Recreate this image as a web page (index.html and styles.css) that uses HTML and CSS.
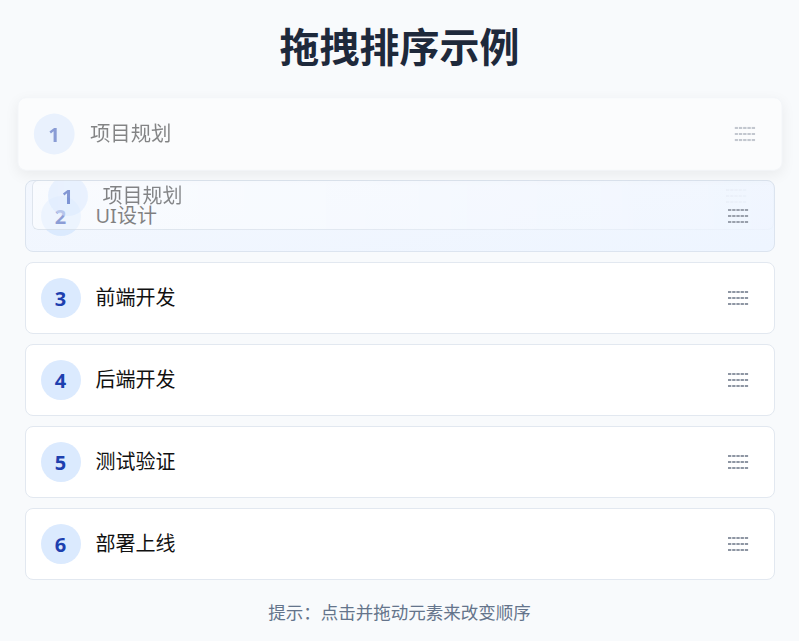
FILE: index.html
```html
<!DOCTYPE html>
<html lang="zh-CN">
<head>
  <meta charset="UTF-8" />
  <meta name="viewport" content="width=device-width, initial-scale=1.0" />
  <title>拖拽排序示例</title>
  <link rel="stylesheet" href="styles.css">
</head>
<body>
  <h1 class="title">拖拽排序示例</h1>

  <div class="sort-list">
    <div class="sort-item dragging">
      <span class="num">1</span>
      <span class="label">项目规划</span>
      <svg class="handle" viewBox="0 0 21 14" width="21" height="14"><path d="M0 1H21M0 7H21M0 13H21" /></svg>
    </div>
    <div class="sort-item over">
      <span class="num">2</span>
      <span class="label">UI设计</span>
      <svg class="handle" viewBox="0 0 21 14" width="21" height="14"><path d="M0 1H21M0 7H21M0 13H21" /></svg>
    </div>
    <div class="sort-item">
      <span class="num">3</span>
      <span class="label">前端开发</span>
      <svg class="handle" viewBox="0 0 21 14" width="21" height="14"><path d="M0 1H21M0 7H21M0 13H21" /></svg>
    </div>
    <div class="sort-item">
      <span class="num">4</span>
      <span class="label">后端开发</span>
      <svg class="handle" viewBox="0 0 21 14" width="21" height="14"><path d="M0 1H21M0 7H21M0 13H21" /></svg>
    </div>
    <div class="sort-item">
      <span class="num">5</span>
      <span class="label">测试验证</span>
      <svg class="handle" viewBox="0 0 21 14" width="21" height="14"><path d="M0 1H21M0 7H21M0 13H21" /></svg>
    </div>
    <div class="sort-item">
      <span class="num">6</span>
      <span class="label">部署上线</span>
      <svg class="handle" viewBox="0 0 21 14" width="21" height="14"><path d="M0 1H21M0 7H21M0 13H21" /></svg>
    </div>

    <!-- drag image following the cursor -->
    <div class="ghost">
      <div class="sort-item ghost-item">
        <span class="num">1</span>
        <span class="label">项目规划</span>
        <svg class="handle" viewBox="0 0 21 14" width="21" height="14"><path d="M0 1H21M0 7H21M0 13H21" /></svg>
      </div>
    </div>
  </div>

  <p class="hint">提示：点击并拖动元素来改变顺序</p>
</body>
</html>
```

FILE: styles.css
```css
:root {
  --bg: #f8fafc;
  --text: #111;
  --title: #1e293b;
  --border: #e2e8f0;
  --circle-bg: #dbeafe;
  --circle-text: #1e40af;
  --handle: #8e96a3;
  --hint: #64748b;
}

body {
  margin: 0;
  padding: 20px 0 0;
  background-color: var(--bg);
  font-family: "Noto Sans", "Noto Sans CJK SC", sans-serif;
  color: var(--text);
}

.title {
  margin: 0 0 28px;
  font-family: "Noto Sans CJK SC", sans-serif;
  font-size: 40px;
  line-height: 50px;
  font-weight: 700;
  text-align: center;
  color: var(--title);
}

.sort-list {
  position: relative;
  max-width: 750px;
  margin: 0 auto;
  display: flex;
  flex-direction: column;
  gap: 10px;
}

.sort-item {
  display: flex;
  align-items: center;
  height: 40px;
  padding: 15px;
  background: #fff;
  border: 1px solid var(--border);
  border-radius: 8px;
}

.num {
  display: flex;
  align-items: center;
  justify-content: center;
  width: 40px;
  height: 40px;
  border-radius: 50%;
  background-color: var(--circle-bg);
  color: var(--circle-text);
  font-size: 20px;
  font-weight: 700;
}

.label {
  flex: 1;
  margin-left: 15px;
  font-size: 20px;
  line-height: 28px;
}

.handle {
  margin-right: 10px;
  fill: none;
  stroke: var(--handle);
  stroke-width: 2.2;
  stroke-dasharray: 3.3 0.9;
}

.dragging {
  opacity: 0.5;
  transform: scale(1.02);
  box-shadow: 0 4px 14px rgba(0, 0, 0, 0.12);
  border-color: #eef1f5;
}

.over {
  background: linear-gradient(170deg, #f3f7fe, #eef5ff);
  border-color: #dce4ef;
}

.ghost {
  position: absolute;
  left: 7px;
  top: 82px;
  width: 740px;
  height: 48px;
  overflow: hidden;
  border: 1px solid rgba(203, 213, 225, 0.6);
  border-radius: 6px;
  background: rgba(255, 255, 255, 0.5);
  -webkit-mask-image: linear-gradient(90deg, #000 0%, rgba(0,0,0,0.8) 40%, rgba(0,0,0,0.15) 100%);
  mask-image: linear-gradient(90deg, #000 0%, rgba(0,0,0,0.8) 40%, rgba(0,0,0,0.15) 100%);
}

.ghost-item {
  margin: -21px 0 0 -1px;
  opacity: 0.55;
  background: transparent;
  border-color: transparent;
}

.ghost-item .handle {
  opacity: 0.5;
}

.hint {
  margin: 20px 0 0;
  font-size: 17.5px;
  line-height: 24px;
  text-align: center;
  color: var(--hint);
}
```
